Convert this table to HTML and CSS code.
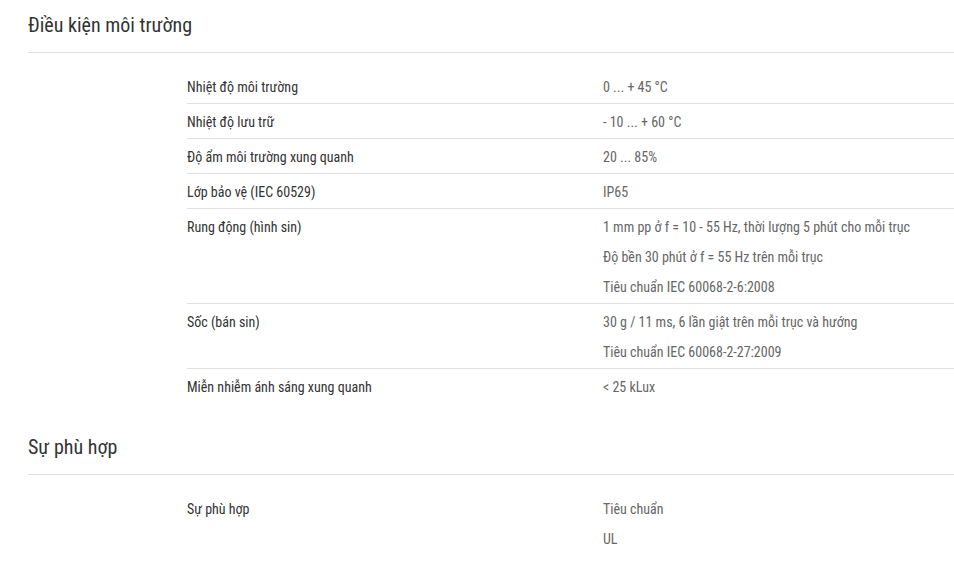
FILE: index.html
```html
<!DOCTYPE html>
<html lang="vi">
<head>
<meta charset="utf-8">
<link rel="stylesheet" href="styles.css">
</head>
<body>
<section class="section">
  <h2 class="section-title">Điều kiện môi trường</h2>
  <div class="spec">
    <div class="row"><div class="label">Nhiệt độ môi trường</div><div class="value"><div>0 ... + 45 °C</div></div></div>
    <div class="row"><div class="label">Nhiệt độ lưu trữ</div><div class="value"><div>- 10 ... + 60 °C</div></div></div>
    <div class="row"><div class="label">Độ ẩm môi trường xung quanh</div><div class="value"><div>20 ... 85%</div></div></div>
    <div class="row"><div class="label">Lớp bảo vệ (IEC 60529)</div><div class="value"><div>IP65</div></div></div>
    <div class="row"><div class="label">Rung động (hình sin)</div><div class="value"><div>1 mm pp ở f = 10 - 55 Hz, thời lượng 5 phút cho mỗi trục</div><div>Độ bền 30 phút ở f = 55 Hz trên mỗi trục</div><div>Tiêu chuẩn IEC 60068-2-6:2008</div></div></div>
    <div class="row"><div class="label">Sốc (bán sin)</div><div class="value"><div>30 g / 11 ms, 6 lần giật trên mỗi trục và hướng</div><div>Tiêu chuẩn IEC 60068-2-27:2009</div></div></div>
    <div class="row"><div class="label">Miễn nhiễm ánh sáng xung quanh</div><div class="value"><div>&lt; 25 kLux</div></div></div>
  </div>
</section>
<section class="section">
  <h2 class="section-title">Sự phù hợp</h2>
  <div class="spec">
    <div class="row"><div class="label">Sự phù hợp</div><div class="value"><div>Tiêu chuẩn</div><div>UL</div></div></div>
  </div>
</section>
</body>
</html>
```
FILE: styles.css
```css
html, body {
  margin: 0;
  padding: 0;
  background: #fff;
}
body {
  font-family: Roboto, "Noto Sans", sans-serif;
  font-stretch: condensed;
  color: #333;
  padding: 11px 0 0 28px;
}
.section + .section {
  margin-top: 30px;
}
.section-title {
  margin: 0;
  font-size: 20px;
  font-weight: 400;
  line-height: 28px;
  padding-bottom: 13px;
  border-bottom: 1px solid #e0e0e0;
  color: #333;
}
.spec {
  margin: 16px 0 0 159px;
}
.row {
  display: grid;
  grid-template-columns: 416px 1fr;
  padding: 3px 0 1px;
  border-bottom: 1px solid #e0e0e0;
  font-size: 14px;
  line-height: 30px;
}
.row:last-child {
  border-bottom: none;
}
.label {
  color: #333;
}
.value {
  color: #666;
}
```
